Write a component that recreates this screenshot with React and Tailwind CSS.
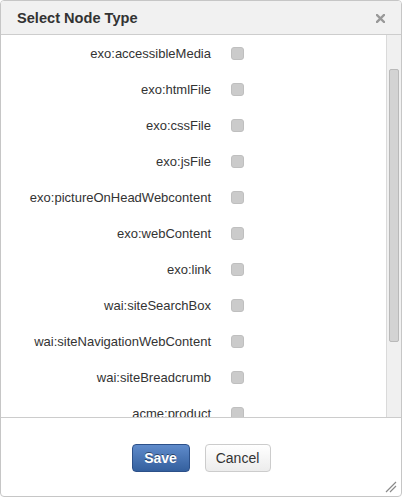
import React from "react";

const items = [
  "exo:accessibleMedia",
  "exo:htmlFile",
  "exo:cssFile",
  "exo:jsFile",
  "exo:pictureOnHeadWebcontent",
  "exo:webContent",
  "exo:link",
  "wai:siteSearchBox",
  "wai:siteNavigationWebContent",
  "wai:siteBreadcrumb",
  "acme:product",
  "acme:category",
];

export default function App() {
  return (
    <div className="w-[402px] h-[497px] border border-[#c6c6c6] rounded-[4px] flex flex-col bg-white overflow-hidden font-['Liberation_Sans',Arial,sans-serif] text-[#333333]">
      <div className="h-[34px] shrink-0 bg-[#f1f1f1] border-b border-[#cdcdcd] flex items-center justify-between pl-4 pr-4">
        <span className="text-[14.6px] font-bold text-[#333333] leading-none pt-[1px]">Select Node Type</span>
        <svg width="9" height="9" viewBox="0 0 9 9" className="mt-[1px]">
          <path d="M1 1 L8 8 M8 1 L1 8" stroke="#999999" strokeWidth="2.4" strokeLinecap="square" />
        </svg>
      </div>
      <div className="h-[382px] shrink-0 flex overflow-hidden">
        <div className="flex-1 overflow-hidden">
          {items.map((t) => (
            <div key={t} className="h-[36px] grid grid-cols-[210px_auto] items-center">
              <span className="text-right text-[13px] leading-[15px] pt-[1px]">{t}</span>
              <span className="ml-[20px] w-[13px] h-[13px] rounded-[3px] bg-[#cbcbcb] border border-[#bfbfbf]"></span>
            </div>
          ))}
        </div>
        <div className="w-[15px] shrink-0 bg-[#f0f0f0] border-l border-[#dadada]">
          <div className="ml-[2px] mt-[34px] w-[10px] h-[273px] bg-[#d3d3d3] border border-[#b9b9b9] rounded-[2px]"></div>
        </div>
      </div>
      <div className="flex-1 border-t border-[#cccccc] flex flex-col">
        <div className="flex-1 flex items-center justify-center gap-[15px] pt-[1px]">
          <button className="w-[58px] h-[28px] rounded-[4px] border border-[#2c5089] bg-gradient-to-b from-[#5f8bcb] to-[#34609e] text-white text-[14px] font-bold leading-none [text-shadow:0_-1px_0_rgba(0,0,0,0.45)]">
            Save
          </button>
          <button className="w-[66px] h-[28px] rounded-[4px] border border-[#cccccc] bg-gradient-to-b from-[#ffffff] to-[#ececec] text-[#333333] text-[14px] leading-none">
            Cancel
          </button>
        </div>
        <div className="h-0 flex justify-end">
          <svg width="12" height="12" viewBox="0 0 12 12" className="-mt-[15px] mr-[4px]">
            <path d="M1 11 L11 1 M5 11 L11 5" stroke="#8a8a8a" strokeWidth="1.2" />
          </svg>
        </div>
      </div>
    </div>
  );
}
